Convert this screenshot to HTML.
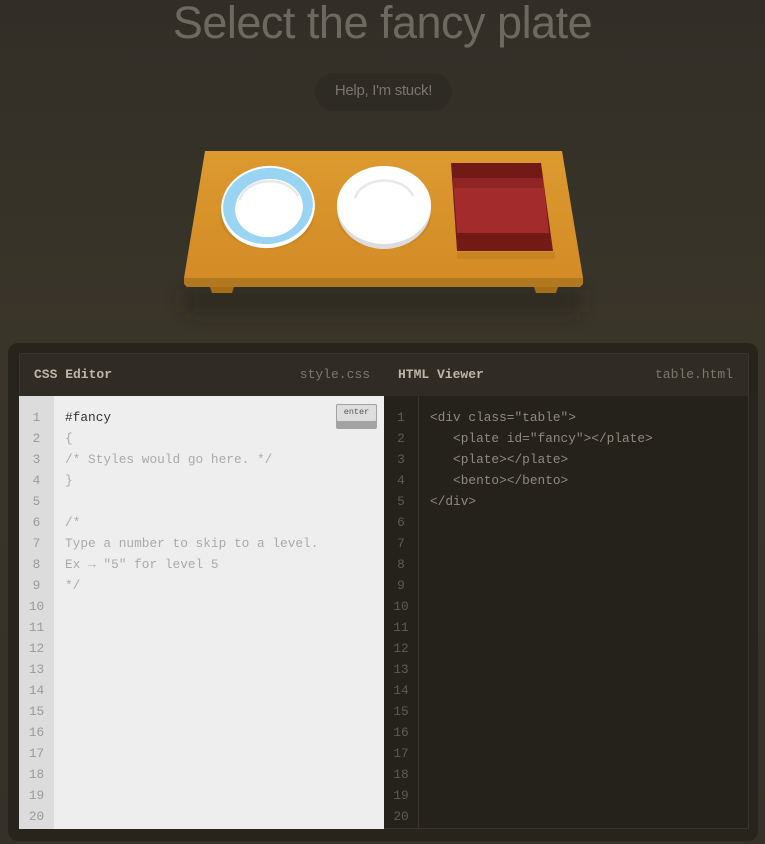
<!DOCTYPE html>
<html><head><meta charset="utf-8"><style>
*{margin:0;padding:0;box-sizing:border-box}
html,body{width:765px;height:844px;overflow:hidden}
body{background:linear-gradient(#322e27,#3a3529 330px,#353128 844px);font-family:"Liberation Sans",sans-serif;position:relative}
h1{position:absolute;top:0;left:0;width:765px;text-align:center;font-weight:normal;font-size:45px;color:#6d695f;line-height:46px;letter-spacing:-0.5px}
.help{position:absolute;left:315px;top:73px;width:137px;height:38px;border-radius:19px;background:#2e2a24;color:#7a766c;font-size:15px;line-height:36px;text-align:center;letter-spacing:-0.3px}
.panel{position:absolute;left:8px;top:343px;width:750px;height:498px;background:#27241e;border-radius:10px}
.hdr{position:absolute;top:353px;height:44px;background:#302c25;border:1px solid #3a362e;border-bottom:none;font-family:"Liberation Mono",monospace;font-size:13px;line-height:42px}
.hdr b{position:absolute;left:14px;color:#bdb7a9}
.hdr span{position:absolute;right:15px;color:#7d786c}
.body{position:absolute;top:396px;height:433px;font-family:"Liberation Mono",monospace;font-size:12.8px;line-height:21px}
.gut{position:absolute;top:0;bottom:0;left:0;width:35px;text-align:center;padding-top:11px}
.code{position:absolute;top:0;left:46px;padding-top:11px;white-space:pre}
</style></head><body>
<h1>Select the fancy plate</h1>
<div class="help">Help, I'm stuck!</div>
<svg style="position:absolute;left:0;top:0" width="765" height="340">
<defs><filter id="b" x="-20%" y="-200%" width="140%" height="500%"><feGaussianBlur stdDeviation="10"/></filter>
<linearGradient id="t" x1="0" y1="0" x2="0" y2="1"><stop offset="0" stop-color="#dc9a2f"/><stop offset="1" stop-color="#d38b26"/></linearGradient></defs>
<rect x="185" y="290" width="395" height="22" fill="#1f1c17" opacity=".45" filter="url(#b)"/>
<polygon points="210,287 234,287 232,293 212,293" fill="#a66d17"/>
<polygon points="534,287 558,287 556,293 536,293" fill="#a66d17"/>
<polygon points="205,151 562,151 583,278 184,278" fill="url(#t)"/>
<polygon points="184,278 583,278 583,284 580,287 187,287 184,284" fill="#b17820"/>
<ellipse cx="267" cy="216" rx="47" ry="33" fill="#c78420" opacity=".7"/>
<ellipse cx="268" cy="207" rx="47" ry="41" fill="#fff" transform="rotate(-8 268 207)"/>
<ellipse cx="268" cy="206" rx="45" ry="38" fill="#99d5f3" transform="rotate(-8 268 206)"/>
<ellipse cx="269" cy="208" rx="34" ry="29" fill="#fff" transform="rotate(-8 269 208)"/>
<path d="M240 200 A30 22 0 0 1 298 196" fill="none" stroke="#e8e8e8" stroke-width="2.5"/>
<ellipse cx="384" cy="216" rx="47" ry="33" fill="#c78420" opacity=".7"/>
<ellipse cx="384" cy="208" rx="47" ry="41" fill="#dcdcdc"/>
<ellipse cx="384" cy="205" rx="47" ry="39" fill="#fff"/>
<path d="M355 198 A30 22 0 0 1 413 196" fill="none" stroke="#e8e8e8" stroke-width="2.5"/>
<polygon points="457,252 555,252 555,259 457,259" fill="#c78420"/>
<polygon points="451,163 541,163 553,251 457,251" fill="#721a15"/>
<polygon points="453,178 543,178 549,233 457,233" fill="#a32b2c"/>
<rect x="453" y="178" width="90" height="10" fill="#8f2424"/>
</svg>
<div class="panel"></div>
<div class="hdr" style="left:19px;width:366px;border-right:none"><b>CSS Editor</b><span>style.css</span></div>
<div class="hdr" style="left:384px;width:365px;border-left:none"><b>HTML Viewer</b><span>table.html</span></div>
<div class="body" style="left:19px;width:365px;background:#eeeeee">
<div class="gut" style="background:#dcdcdc;color:#9a9a9a">1<br>2<br>3<br>4<br>5<br>6<br>7<br>8<br>9<br>10<br>11<br>12<br>13<br>14<br>15<br>16<br>17<br>18<br>19<br>20</div>
<div class="code" style="color:#aaa"><span style="color:#333">#fancy</span>
{
/* Styles would go here. */
}

/*
Type a number to skip to a level.
Ex → "5" for level 5
*/</div>
<div style="position:absolute;left:317px;top:8px;width:41px;height:25px;background:#a3a3a3;border-radius:2px"></div>
<div style="position:absolute;left:317px;top:8px;width:41px;height:18px;background:#dedede;border:1px solid #a3a3a3;border-radius:2px;font-size:8.5px;line-height:14px;text-align:center;color:#555">enter</div>
</div>
<div class="body" style="left:384px;width:365px;background:#25221c;border-right:1px solid #3a362e;border-bottom:1px solid #3a362e">
<div class="gut" style="color:#5f5b52;border-right:1px solid #3a362e">1<br>2<br>3<br>4<br>5<br>6<br>7<br>8<br>9<br>10<br>11<br>12<br>13<br>14<br>15<br>16<br>17<br>18<br>19<br>20</div>
<div class="code" style="color:#8f8a7e">&lt;div class="table"&gt;
   &lt;plate id="fancy"&gt;&lt;/plate&gt;
   &lt;plate&gt;&lt;/plate&gt;
   &lt;bento&gt;&lt;/bento&gt;
&lt;/div&gt;</div>
</div>
</body></html>
